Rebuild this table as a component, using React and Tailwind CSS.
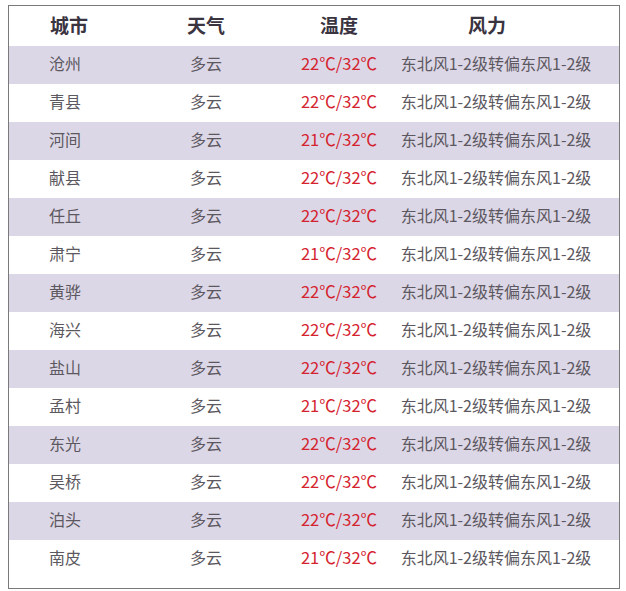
const rows = [
  ['沧州', '22'],
  ['青县', '22'],
  ['河间', '21'],
  ['献县', '22'],
  ['任丘', '22'],
  ['肃宁', '21'],
  ['黄骅', '22'],
  ['海兴', '22'],
  ['盐山', '22'],
  ['孟村', '21'],
  ['东光', '22'],
  ['吴桥', '22'],
  ['泊头', '22'],
  ['南皮', '21'],
]

const cols = 'grid grid-cols-[118px_158px_108px_206px]'

export default function App() {
  return (
    <div className="w-[626px] h-[591px] bg-white pt-[5px] pl-[8px]">
      <div
        className="w-[612px] h-[584px] border border-[#7a7a7a] pb-[10px]"
        style={{ fontFamily: '"Noto Sans CJK SC", "Noto Sans", sans-serif' }}
      >
        {/* header */}
        <div className={`${cols} h-[40px] items-center pb-[2px] text-[19px] font-bold text-[#3a3340]`}>
          <div className="text-center pl-[2px]">城市</div>
          <div className="text-center">天气</div>
          <div className="text-center">温度</div>
          <div className="text-center pr-[18px]">风力</div>
        </div>

        {rows.map(([city, low], i) => (
          <div
            key={city}
            className={`${cols} h-[38px] items-center pb-[4px] text-[16px] text-[#5c5860] ${i % 2 === 0 ? 'bg-[#dcd7e7]' : 'bg-white'}`}
          >
            <div className="text-center pr-[6px]">{city}</div>
            <div className="text-center">多云</div>
            <div className="text-center text-[#d4232e] text-[16.5px]">{low}℃/32℃</div>
            <div className="text-center whitespace-nowrap">东北风1-2级转偏东风1-2级</div>
          </div>
        ))}
      </div>
    </div>
  )
}
